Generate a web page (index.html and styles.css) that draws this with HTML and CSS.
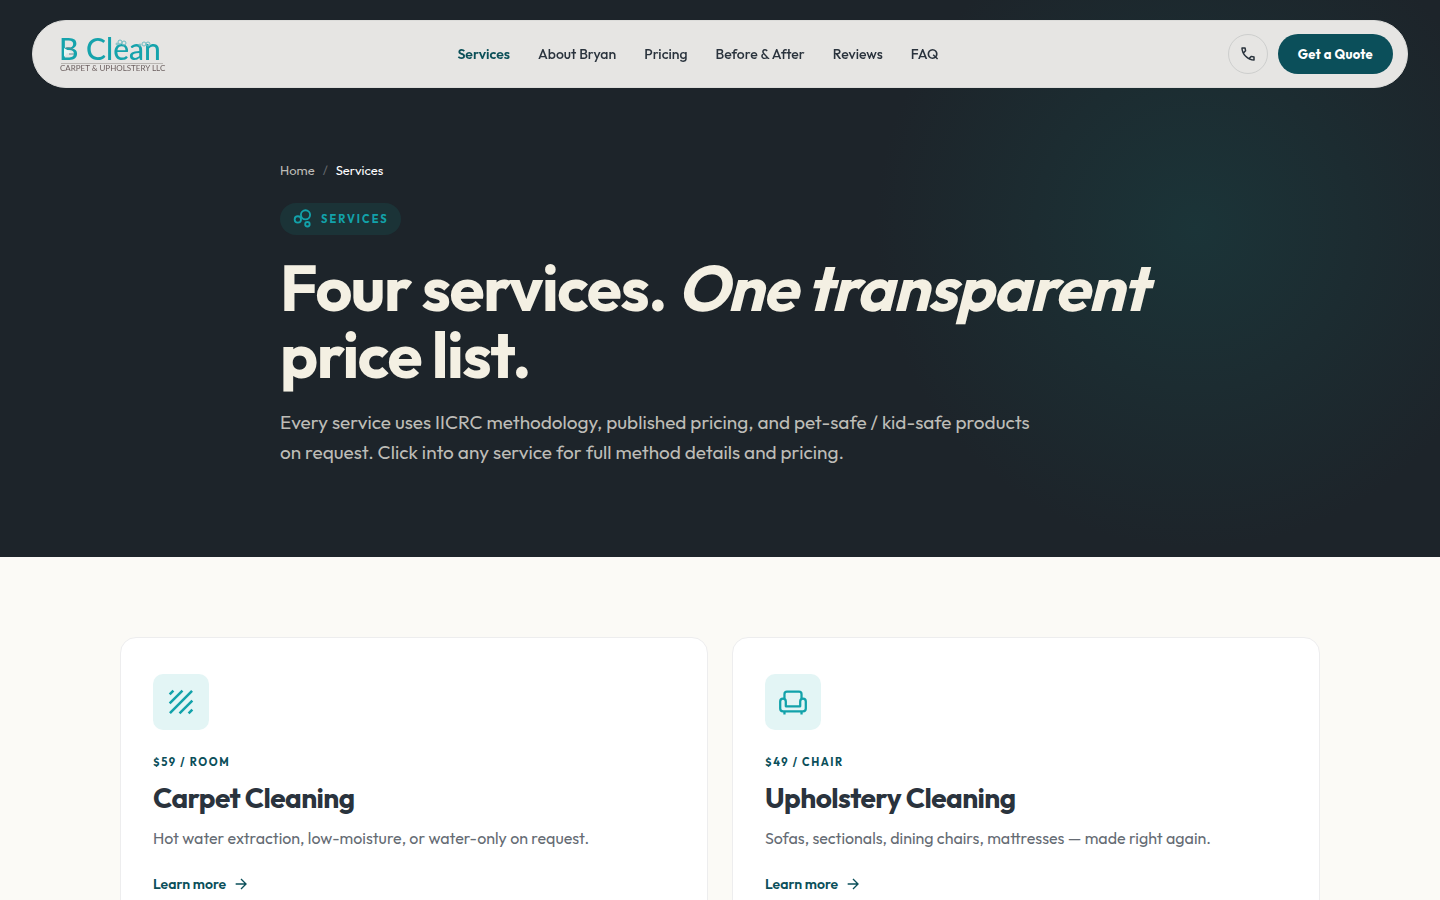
FILE: index.html
```html
<!DOCTYPE html>
<html lang="en">
<head>
    <meta charset="UTF-8">
    <meta name="viewport" content="width=device-width, initial-scale=1.0">
    <title>Services | B Clean Carpet &amp; Upholstery LLC</title>
    <link rel="stylesheet" href="styles.css">
</head>
<body>
    <header class="site-header">
        <a class="logo" href="/" aria-label="B Clean home">
            <svg width="110" height="48" viewBox="0 0 110 48">
                <text class="logo-name" x="1" y="30">B</text>
                <text class="logo-name" x="28" y="30">Clean</text>
                <path d="M6 18v9l3-4 6 1-4-3z" fill="#e6f6f5"/>
                <path d="M8 18c3-1 5 0 7 2M11 24h5" fill="none" stroke="#5f8b93" stroke-width="1"/>
                <g fill="none" stroke="#6fbcc3" stroke-width="1">
                    <circle cx="62" cy="12" r="2"/>
                    <circle cx="66" cy="13" r="2"/>
                    <circle cx="59" cy="14" r="1"/>
                    <circle cx="86" cy="14" r="2"/>
                    <circle cx="90" cy="14" r="2"/>
                    <circle cx="82" cy="15" r="1"/>
                </g>
                <path d="M3 33.500h102" stroke="#b9b6b3"/>
                <text class="logo-sub" x="2" y="41">CARPET &amp; UPHOLSTERY LLC</text>
            </svg>
        </a>
        <nav class="main-nav">
            <a class="active" href="/services">Services</a>
            <a href="/about">About Bryan</a>
            <a href="/pricing">Pricing</a>
            <a href="/before-after">Before &amp; After</a>
            <a href="/reviews">Reviews</a>
            <a href="/faq">FAQ</a>
        </nav>
        <div class="header-actions">
            <a class="phone-btn" href="tel:" aria-label="Call us">
                <svg width="18" height="18" viewBox="0 0 24 24" fill="currentColor"><path d="M19.950 21q-3.125 0-6.175-1.362t-5.550-3.863-3.862-5.550T3 4.050q0-.450.300-.750t.750-.300H8.100q.350 0 .625.238t.325.562l.650 3.500q.050.400-.025.675T9.400 8.450L6.975 10.900q.500.925 1.187 1.787t1.513 1.663q.775.775 1.625 1.438T13.100 17l2.350-2.350q.225-.225.588-.337t.712-.063l3.450.700q.350.100.575.363T21 15.900v4.050q0 .450-.300.750t-.750.300M6.025 9l1.650-1.650L7.250 5H5.025q.125 1.025.350 2.025T6.025 9m8.950 8.950q.975.425 1.988.675T19 18.950v-2.200l-2.350-.475z"/></svg>
            </a>
            <a class="quote-btn" href="/quote">Get a Quote</a>
        </div>
    </header>

    <main>
        <section class="hero">
            <div class="hero-inner">
                <nav class="breadcrumb" aria-label="Breadcrumb">
                    <a href="/">Home</a>
                    <span class="sep">/</span>
                    <span class="current">Services</span>
                </nav>
                <div class="badge">
                    <svg width="20" height="20" viewBox="0 0 24 24" fill="none" stroke="currentColor" stroke-width="2.200">
                        <circle cx="15" cy="7" r="5.500"/>
                        <circle cx="5.800" cy="12.500" r="3.800"/>
                        <circle cx="17.300" cy="18.300" r="2.700"/>
                    </svg>
                    Services
                </div>
                <h1>Four services. <em>One transparent</em> price list.</h1>
                <p class="lead">Every service uses IICRC methodology, published pricing, and pet-safe / kid-safe products on request. Click into any service for full method details and pricing.</p>
            </div>
        </section>

        <section class="services">
            <div class="service-grid">
                <article class="card">
                    <div class="card-icon">
                        <svg width="32" height="32" viewBox="0 0 24 24" fill="none" stroke="currentColor" stroke-width="1.900">
                            <path d="M3.500 6.300 6.300 3.500M3.500 13.100 13.100 3.500M3.700 20.300 20.300 3.700M10.900 20.500 20.500 10.900M17.700 20.500 20.500 17.700"/>
                        </svg>
                    </div>
                    <p class="price">$59 / room</p>
                    <h2>Carpet Cleaning</h2>
                    <p class="desc">Hot water extraction, low-moisture, or water-only on request.</p>
                    <a class="learn" href="/services/carpet">Learn more
                        <svg width="16" height="16" viewBox="0 0 24 24" fill="none" stroke="currentColor" stroke-width="2"><path d="M4 12h15M12 4.500l7.500 7.500-7.500 7.500"/></svg>
                    </a>
                </article>
                <article class="card">
                    <div class="card-icon">
                        <svg width="32" height="32" viewBox="0 0 24 24" fill="none" stroke="currentColor" stroke-width="1.700" stroke-linejoin="round">
                            <path d="M5.600 9.400V6.200a1.900 1.900 0 0 1 1.900-1.900h9a1.900 1.900 0 0 1 1.900 1.900v3.200"/>
                            <path d="M6.600 15.200h10.800v-3.600a2.100 2.100 0 0 1 4.200 0v5.200a2.200 2.200 0 0 1-2.200 2.200H4.600a2.200 2.200 0 0 1-2.200-2.200v-5.200a2.100 2.100 0 0 1 4.200 0z"/>
                            <path d="M5.600 19v2.300M18.400 19v2.300"/>
                        </svg>
                    </div>
                    <p class="price">$49 / chair</p>
                    <h2>Upholstery Cleaning</h2>
                    <p class="desc">Sofas, sectionals, dining chairs, mattresses — made right again.</p>
                    <a class="learn" href="/services/upholstery">Learn more
                        <svg width="16" height="16" viewBox="0 0 24 24" fill="none" stroke="currentColor" stroke-width="2"><path d="M4 12h15M12 4.500l7.500 7.500-7.500 7.500"/></svg>
                    </a>
                </article>
            </div>
        </section>
    </main>
</body>
</html>
```
FILE: styles.css
```css
* {
    margin: 0;
    padding: 0;
    box-sizing: border-box;
}

body {
    font-family: 'Outfit', 'Lato', sans-serif;
    background: #fbfaf6;
    color: #2a333d;
    font-size: 16px;
    line-height: 24px;
}

a {
    color: inherit;
    text-decoration: none;
}

svg {
    display: block;
    flex-shrink: 0;
}

/* Header floats over the hero */
.site-header {
    position: fixed;
    top: 20px;
    left: 32px;
    right: 32px;
    z-index: 10;
    display: flex;
    align-items: center;
    justify-content: space-between;
    padding: 13px 14px 13px 25px;
    border: 1px solid #dcdcda;
    border-radius: 34px;
    background: #e6e5e3;
}

.logo {
    margin: -4px 0;
}

.logo-name {
    font-family: 'Lato', sans-serif;
    font-size: 30px;
    font-weight: 500;
    fill: #15a3ac;
}

.logo-sub {
    font-family: 'Lato', sans-serif;
    font-size: 8px;
    fill: #6b5f5f;
}

.main-nav {
    display: flex;
    gap: 28px;
    font-size: 14px;
    font-weight: 500;
}

.main-nav .active {
    color: #0b5058;
    font-weight: 600;
}

.header-actions {
    display: flex;
    gap: 10px;
}

.phone-btn {
    display: flex;
    align-items: center;
    justify-content: center;
    width: 40px;
    height: 40px;
    border: 1px solid #cdcecd;
    border-radius: 50%;
}

.quote-btn {
    padding: 8px 20px;
    border-radius: 20px;
    background: #0b4f5a;
    color: #ffffff;
    font-size: 13px;
    font-weight: 700;
    letter-spacing: 0.02em;
}

/* Hero */
.hero {
    padding: 160px 32px 90px;
    background: radial-gradient(circle 320px at 83% 41%, #1b3438, #1d242a) #1d242a;
    color: #f4f0e3;
}

.hero-inner {
    max-width: 880px;
    margin: 0 auto;
}

.breadcrumb {
    display: flex;
    gap: 8px;
    margin-bottom: 22px;
    font-size: 13px;
    line-height: 21px;
    color: #bdbcb7;
}

.breadcrumb .sep {
    color: #62666a;
}

.breadcrumb .current {
    color: #ffffff;
}

.badge {
    display: flex;
    align-items: center;
    gap: 8px;
    width: fit-content;
    padding: 6px 12px 6px 13px;
    border-radius: 16px;
    background: #1b3337;
    color: #12a2aa;
    font-size: 11px;
    font-weight: 700;
    line-height: 20px;
    letter-spacing: 2px;
    text-transform: uppercase;
}

h1 {
    margin-top: 19px;
    font-size: 64px;
    font-weight: 700;
    line-height: 67px;
    letter-spacing: -0.022em;
}

.lead {
    max-width: 760px;
    margin-top: 19px;
    font-size: 19px;
    line-height: 30px;
    color: #bdbcb7;
}

/* Service cards */
.services {
    padding: 80px 32px;
}

.service-grid {
    display: grid;
    grid-template-columns: repeat(2, 1fr);
    gap: 24px;
    max-width: 1200px;
    margin: 0 auto;
}

.card {
    padding: 36px 32px;
    border: 1px solid #ededee;
    border-radius: 16px;
    background: #ffffff;
}

.card-icon {
    display: flex;
    align-items: center;
    justify-content: center;
    width: 56px;
    height: 56px;
    margin-bottom: 24px;
    border-radius: 10px;
    background: #e3f5f5;
    color: #12a2aa;
}

.price {
    font-size: 11px;
    font-weight: 700;
    line-height: 16px;
    letter-spacing: 0.14em;
    text-transform: uppercase;
    color: #0b4f5a;
}

h2 {
    margin: 12px 0;
    font-size: 28px;
    font-weight: 700;
    line-height: 32px;
    letter-spacing: -0.02em;
}

.desc {
    color: #656b73;
    line-height: 24px;
}

.learn {
    display: inline-flex;
    align-items: center;
    gap: 7px;
    margin-top: 22px;
    color: #0b4f5a;
    font-size: 14px;
    font-weight: 600;
}

@media (max-width: 900px) {
    .main-nav {
        display: none;
    }

    .service-grid {
        grid-template-columns: 1fr;
    }

    h1 {
        font-size: 44px;
        line-height: 48px;
    }
}
```
